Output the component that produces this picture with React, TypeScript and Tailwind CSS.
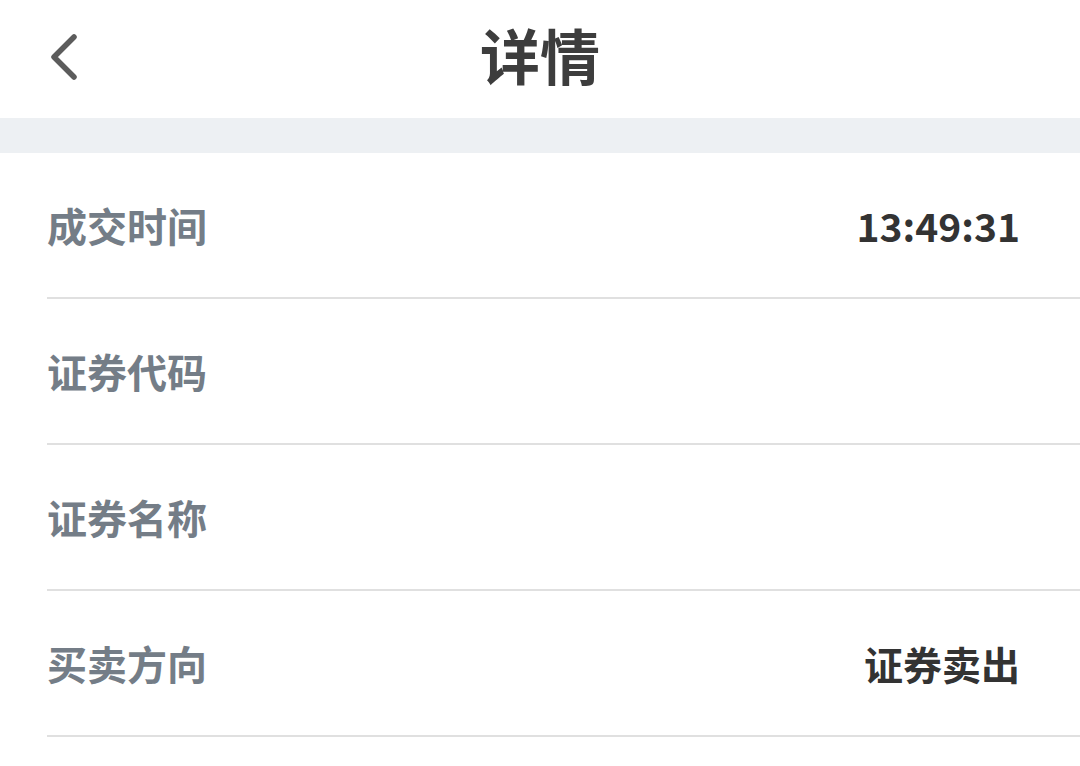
import React from "react";

interface Row {
  label: string;
  value?: string;
}

const rows: Row[] = [
  { label: "成交时间", value: "13:49:31" },
  { label: "证券代码" },
  { label: "证券名称" },
  { label: "买卖方向", value: "证券卖出" },
];

const font = { fontFamily: '"Noto Sans CJK SC", "Noto Sans", sans-serif' };

export default function App() {
  return (
    <div className="min-h-[766px] w-[1080px] bg-white overflow-hidden" style={font}>
      {/* header */}
      <header className="relative flex h-[118px] items-center justify-center">
        <button className="absolute left-[46px] top-[30px] p-0" aria-label="back">
          <svg width="34" height="54" viewBox="0 0 34 54" fill="none">
            <path
              d="M28 7 L8 27 L28 47"
              stroke="#5c5c5c"
              strokeWidth="5.5"
              strokeLinecap="round"
              strokeLinejoin="round"
            />
          </svg>
        </button>
        <h1 className="text-[60px] font-bold leading-none text-[#3d3d3d] -mt-[10px]">详情</h1>
      </header>

      {/* gap band */}
      <div className="h-[35px] bg-[#edf0f3]" />

      {/* rows */}
      <div className="pl-[47px]">
        {rows.map((r) => (
          <div key={r.label} className="border-b-2 border-[#e0e0e0]">
            <div className="flex h-[144px] items-center justify-between pr-[60px]">
              <span className="text-[40px] font-semibold leading-none text-[#747d87]">{r.label}</span>
              {r.value && (
                <span className="text-[39px] font-bold leading-none text-[#333333]">{r.value}</span>
              )}
            </div>
          </div>
        ))}
      </div>
    </div>
  );
}
